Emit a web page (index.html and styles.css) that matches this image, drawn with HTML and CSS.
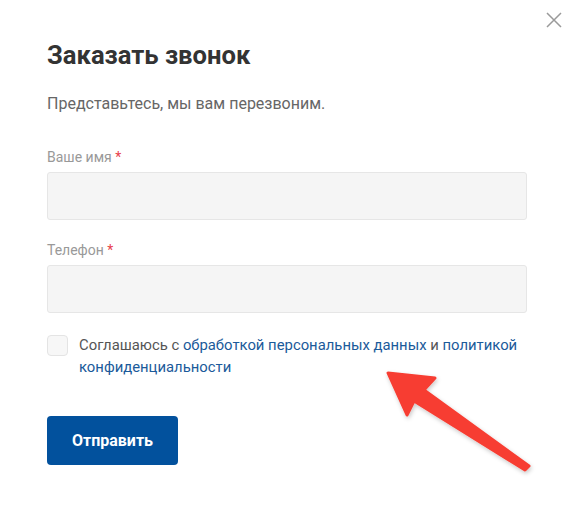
FILE: index.html
```html
<!DOCTYPE html>
<html lang="ru">
<head>
<meta charset="utf-8">
<link rel="stylesheet" href="styles.css">
</head>
<body>
<div class="modal">
  <button class="close" aria-label="Закрыть">
    <svg width="16" height="16" viewBox="0 0 16 16"><path d="M1 1L15 15M15 1L1 15" stroke="#9a9a9a" stroke-width="1.5" fill="none"/></svg>
  </button>
  <h1 class="title">Заказать звонок</h1>
  <p class="subtitle">Представьтесь, мы вам перезвоним.</p>
  <form class="form">
    <label class="field">
      <span class="label">Ваше имя <span class="req">*</span></span>
      <input class="input" type="text">
    </label>
    <label class="field">
      <span class="label">Телефон <span class="req">*</span></span>
      <input class="input" type="text">
    </label>
    <div class="agree">
      <span class="checkbox"></span>
      <p class="agree-text">Соглашаюсь с <a href="#">обработкой персональных данных</a> и <a href="#">политикой</a> <a href="#">конфиденциальности</a></p>
    </div>
    <button class="submit" type="button">Отправить</button>
  </form>
  <svg class="arrow" width="170" height="120" viewBox="370 360 170 120">
    <defs>
      <filter id="sh" x="-20%" y="-20%" width="140%" height="140%">
        <feDropShadow dx="1" dy="2" stdDeviation="2" flood-color="#000" flood-opacity="0.22"/>
      </filter>
    </defs>
    <polygon points="388,373 435,378 424,390 529,466 525,470 414,401 407,415" fill="#f73d32" stroke="#f73d32" stroke-width="3" stroke-linejoin="round" filter="url(#sh)"/>
  </svg>
</div>
</body>
</html>
```

FILE: styles.css
```css
* { box-sizing: border-box; }
html, body { margin: 0; padding: 0; background: #fff; }
body { font-family: Roboto, "Noto Sans", sans-serif; }
.modal {
  position: relative;
  width: 574px;
  height: 511px;
  padding: 38px 47px 0 47px;
  background: #fff;
}
.close {
  position: absolute;
  top: 12px;
  right: 12px;
  width: 16px;
  height: 16px;
  padding: 0;
  border: 0;
  background: none;
  display: flex;
}
.title {
  margin: 0;
  font-size: 25.6px;
  line-height: 34px;
  font-weight: 700;
  color: #333;
}
.subtitle {
  margin: 22px 0 0;
  font-size: 16px;
  line-height: 20px;
  color: #666;
}
.form { margin-top: 34px; display: flex; flex-direction: column; }
.field { display: flex; flex-direction: column; margin-bottom: 21px; }
.label {
  font-size: 14px;
  line-height: 18px;
  color: #999;
  margin-bottom: 6px;
}
.req { color: #e8414b; }
.input {
  width: 480px;
  height: 48px;
  background: #f5f5f5;
  border: 1px solid #e6e6e6;
  border-radius: 3px;
  font: inherit;
  outline: none;
}
.agree { display: flex; gap: 11px; }
.checkbox {
  flex: none;
  width: 21px;
  height: 21px;
  margin-top: 1px;
  background: #f7f7f7;
  border: 1px solid #e4e4e4;
  border-radius: 4px;
}
.agree-text {
  margin: 0;
  width: 450px;
  font-size: 14.85px;
  line-height: 22px;
  color: #555;
}
.agree-text a { color: #1b5a9a; text-decoration: none; }
.submit {
  margin-top: 38px;
  width: 131px;
  height: 49px;
  border: 0;
  border-radius: 4px;
  background: #02519d;
  color: #fff;
  font-family: Roboto, sans-serif;
  font-weight: 700;
  font-size: 16px;
}
.arrow { position: absolute; left: 370px; top: 360px; }
```
